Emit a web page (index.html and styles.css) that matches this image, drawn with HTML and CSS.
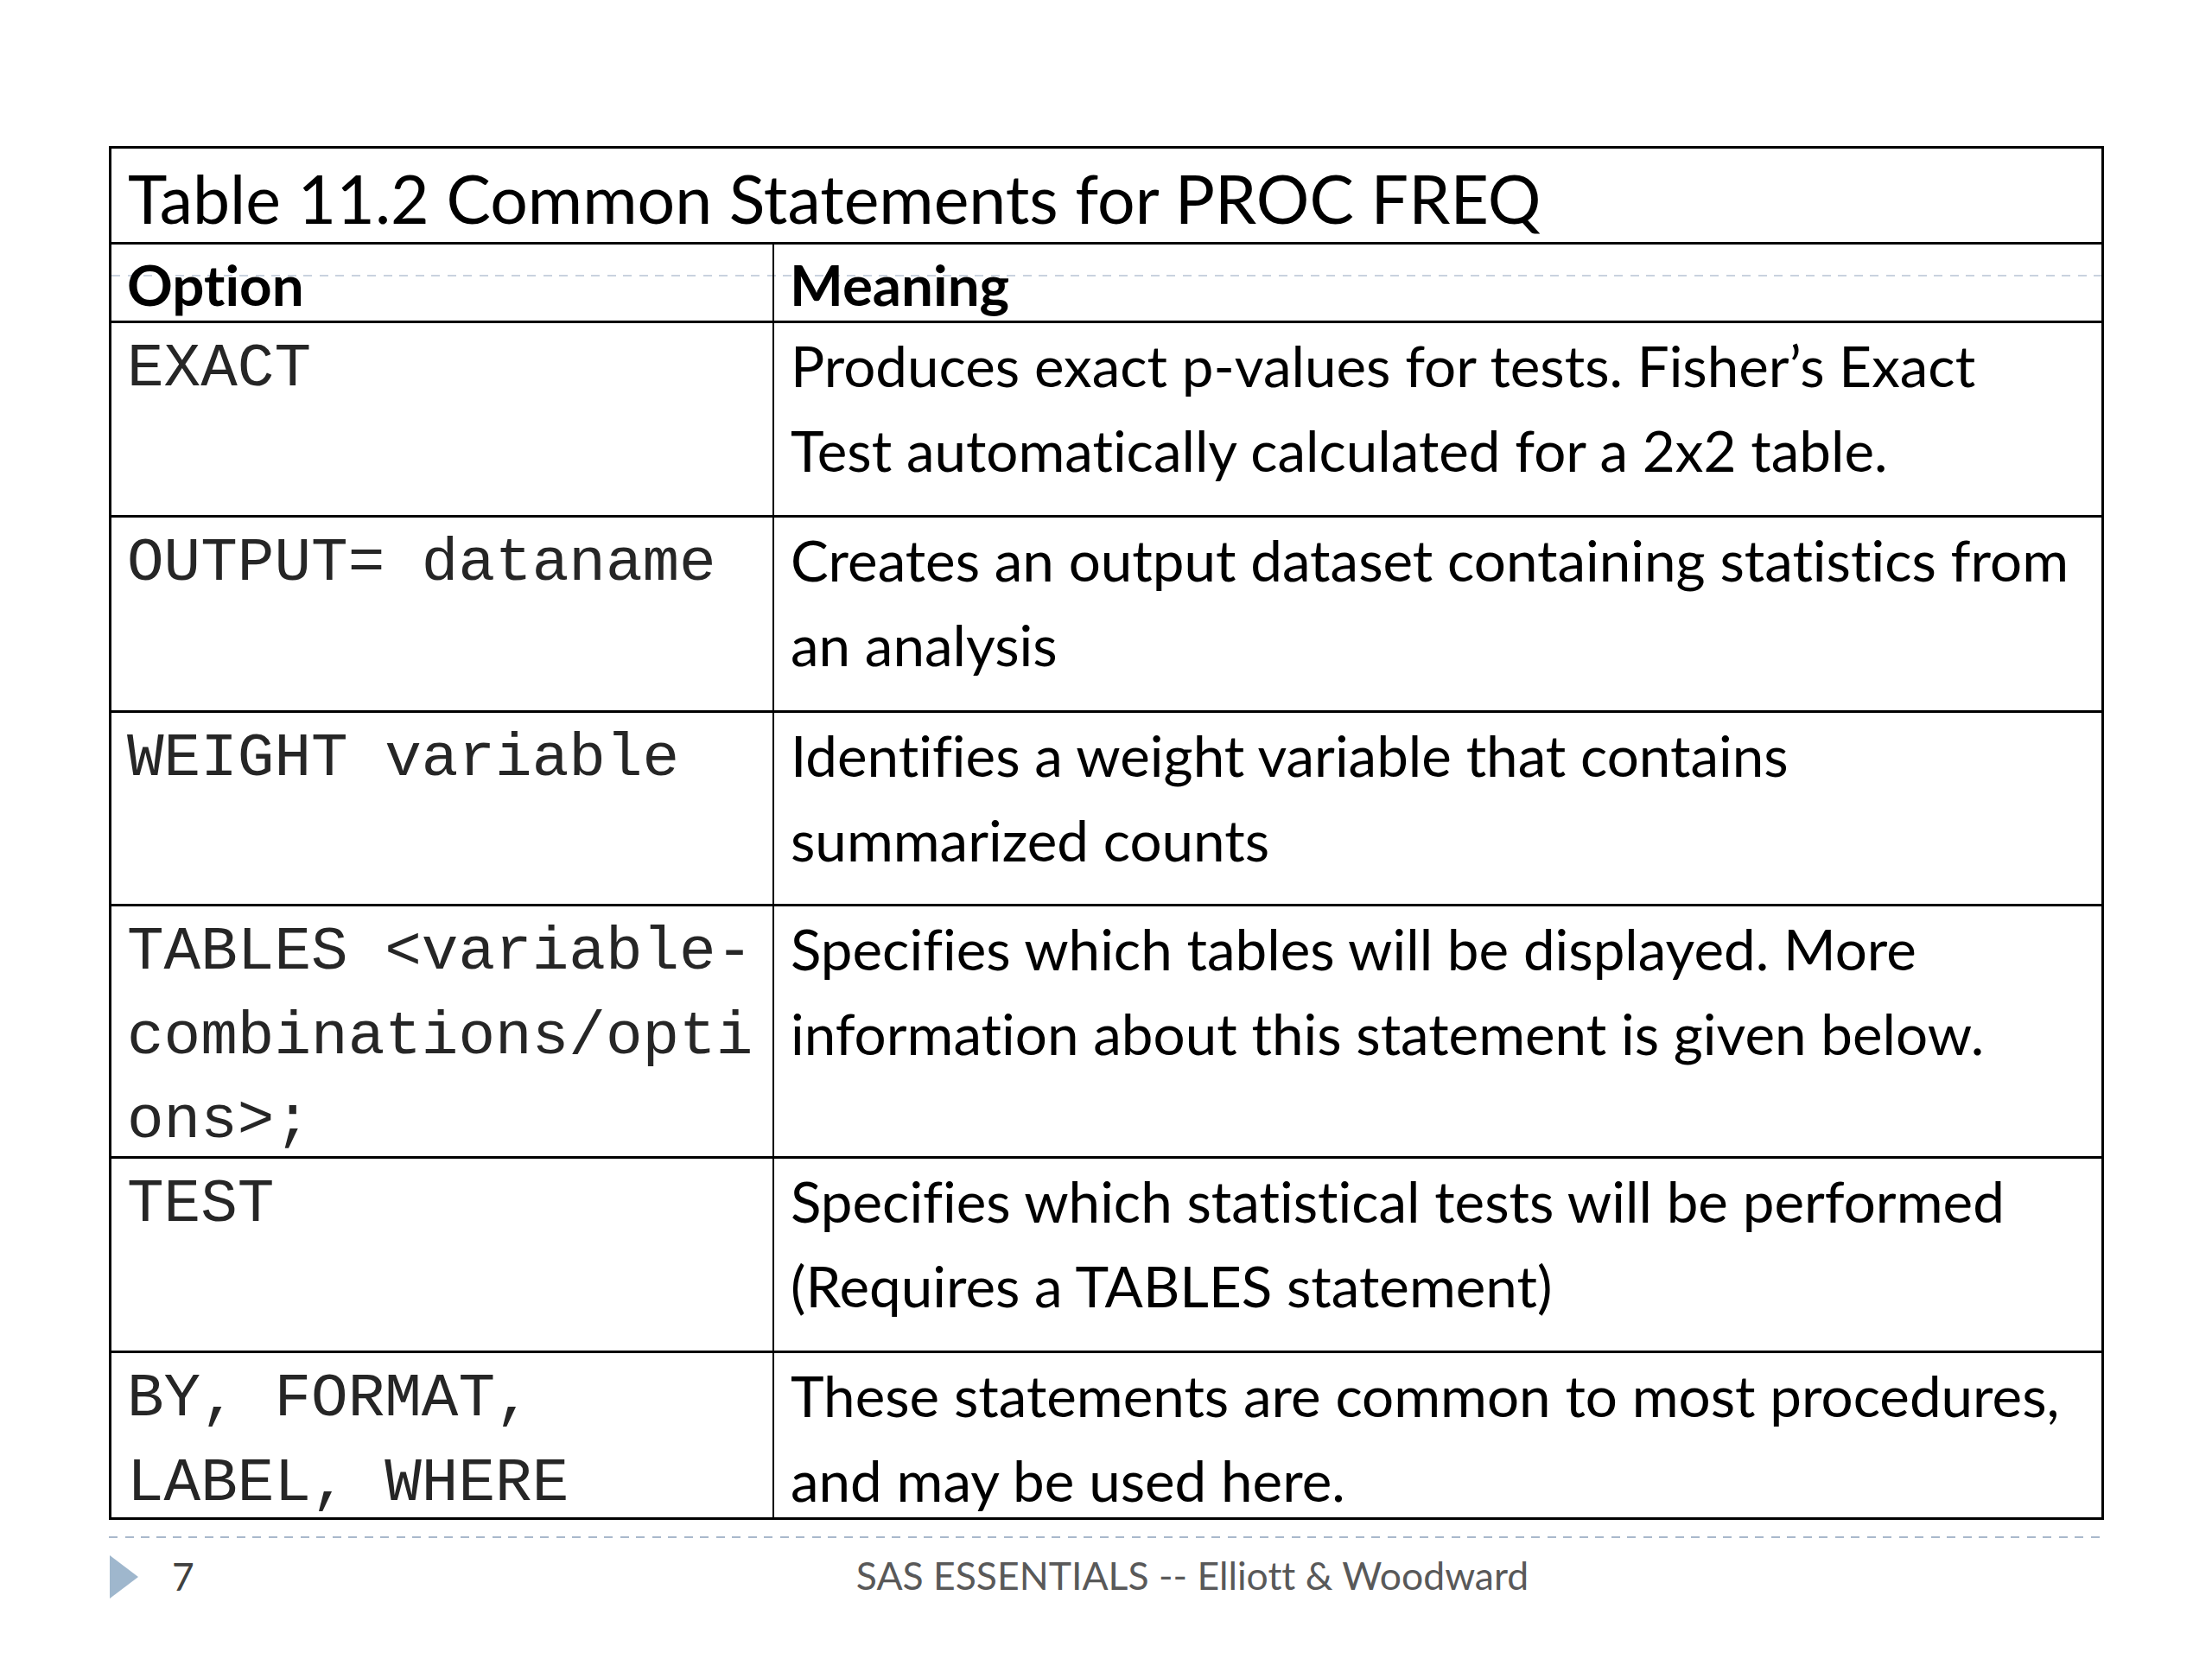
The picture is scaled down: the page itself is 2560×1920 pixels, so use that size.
FILE: index.html
```html
<!DOCTYPE html>
<html lang="en">
<head>
<meta charset="utf-8">
<title>Table 11.2 Common Statements for PROC FREQ</title>
<link rel="stylesheet" href="styles.css">
</head>
<body>
<div class="slide">
  <div class="tbl">
    <div class="guide"></div>
    <div class="cell title">Table 11.2 Common Statements for PROC FREQ</div>
    <div class="cell head">Option</div>
    <div class="cell head c2">Meaning</div>

    <div class="cell code">EXACT</div>
    <div class="cell text c2">Produces exact p-values for tests. Fisher’s Exact<br>Test automatically calculated for a 2x2 table.</div>

    <div class="cell code">OUTPUT= dataname</div>
    <div class="cell text c2">Creates an output dataset containing statistics from<br>an analysis</div>

    <div class="cell code">WEIGHT variable</div>
    <div class="cell text c2">Identifies a weight variable that contains<br>summarized counts</div>

    <div class="cell code">TABLES &lt;variable-<br>combinations/opti<br>ons&gt;;</div>
    <div class="cell text c2">Specifies which tables will be displayed. More<br>information about this statement is given below.</div>

    <div class="cell code">TEST</div>
    <div class="cell text c2">Specifies which statistical tests will be performed<br>(Requires a TABLES statement)</div>

    <div class="cell code">BY, FORMAT,<br>LABEL, WHERE</div>
    <div class="cell text c2">These statements are common to most procedures,<br>and may be used here.</div>
  </div>
  <div class="rule"></div>
  <footer class="foot">
    <div class="pg"><span class="tri"></span><span class="num">7</span></div>
    <div class="ftext">SAS ESSENTIALS -- Elliott &amp; Woodward</div>
  </footer>
</div>
</body>
</html>
```
FILE: styles.css
```css
html, body {
  margin: 0;
  padding: 0;
  background: #ffffff;
}

.slide {
  width: 2560px;
  height: 1920px;
  box-sizing: border-box;
  padding: 169px 0 0 126px;
  font-family: Lato, "Open Sans", sans-serif;
  font-variant-ligatures: none;
  color: #000;
}

.tbl {
  position: relative;
  display: grid;
  grid-template-columns: 765px 1538px;
  grid-template-rows: 108px 91px 225px 226px 224px 292px 225px 193px;
  border: 3px solid #000;
  width: max-content;
}

.guide {
  position: absolute;
  left: 0;
  right: 0;
  top: 146px;
  height: 2px;
  background: repeating-linear-gradient(90deg, #c9d2df 0 10px, transparent 10px 18.5px);
}

.cell {
  position: relative;
  box-sizing: border-box;
  border-top: 3px solid #000;
  padding-left: 18px;
  white-space: nowrap;
}

.c2 {
  border-left: 2px solid #000;
}

.title {
  grid-column: 1 / span 2;
  border-top: 0;
  font-size: 77px;
  line-height: 92px;
  padding-top: 11px;
  padding-left: 19px;
}

.head {
  font-weight: 700;
  font-size: 65.5px;
  line-height: 92px;
}

.text {
  font-size: 65.5px;
  line-height: 97.5px;
  padding-left: 19px;
}

.code {
  font-family: "Liberation Mono", "Courier New", monospace;
  font-size: 71px;
  line-height: 97.5px;
  padding-top: 5px;
  padding-left: 18px;
  color: #262626;
}

.rule {
  margin-top: 19px;
  width: 2306px;
  height: 2px;
  background: repeating-linear-gradient(90deg, #a9b9cc 0 10px, transparent 10px 18.5px);
}

.foot {
  display: grid;
  grid-template-columns: 114px 1fr;
  margin-left: -126px;
  padding-right: 40px;
  margin-top: 20px;
  align-items: center;
}

.pg {
  display: flex;
  align-items: center;
  padding-left: 127px;
  gap: 39px;
  width: 200px;
}

.tri {
  width: 0;
  height: 0;
  border-top: 25.5px solid transparent;
  border-bottom: 25.5px solid transparent;
  border-left: 33px solid #9fb7cd;
}

.num {
  font-size: 44.5px;
  color: #404040;
  line-height: 51px;
  margin-top: -4px;
}

.ftext {
  text-align: center;
  font-size: 44.5px;
  line-height: 51px;
  color: #595959;
  padding-left: 126px;
  margin-top: -6px;
}
```
